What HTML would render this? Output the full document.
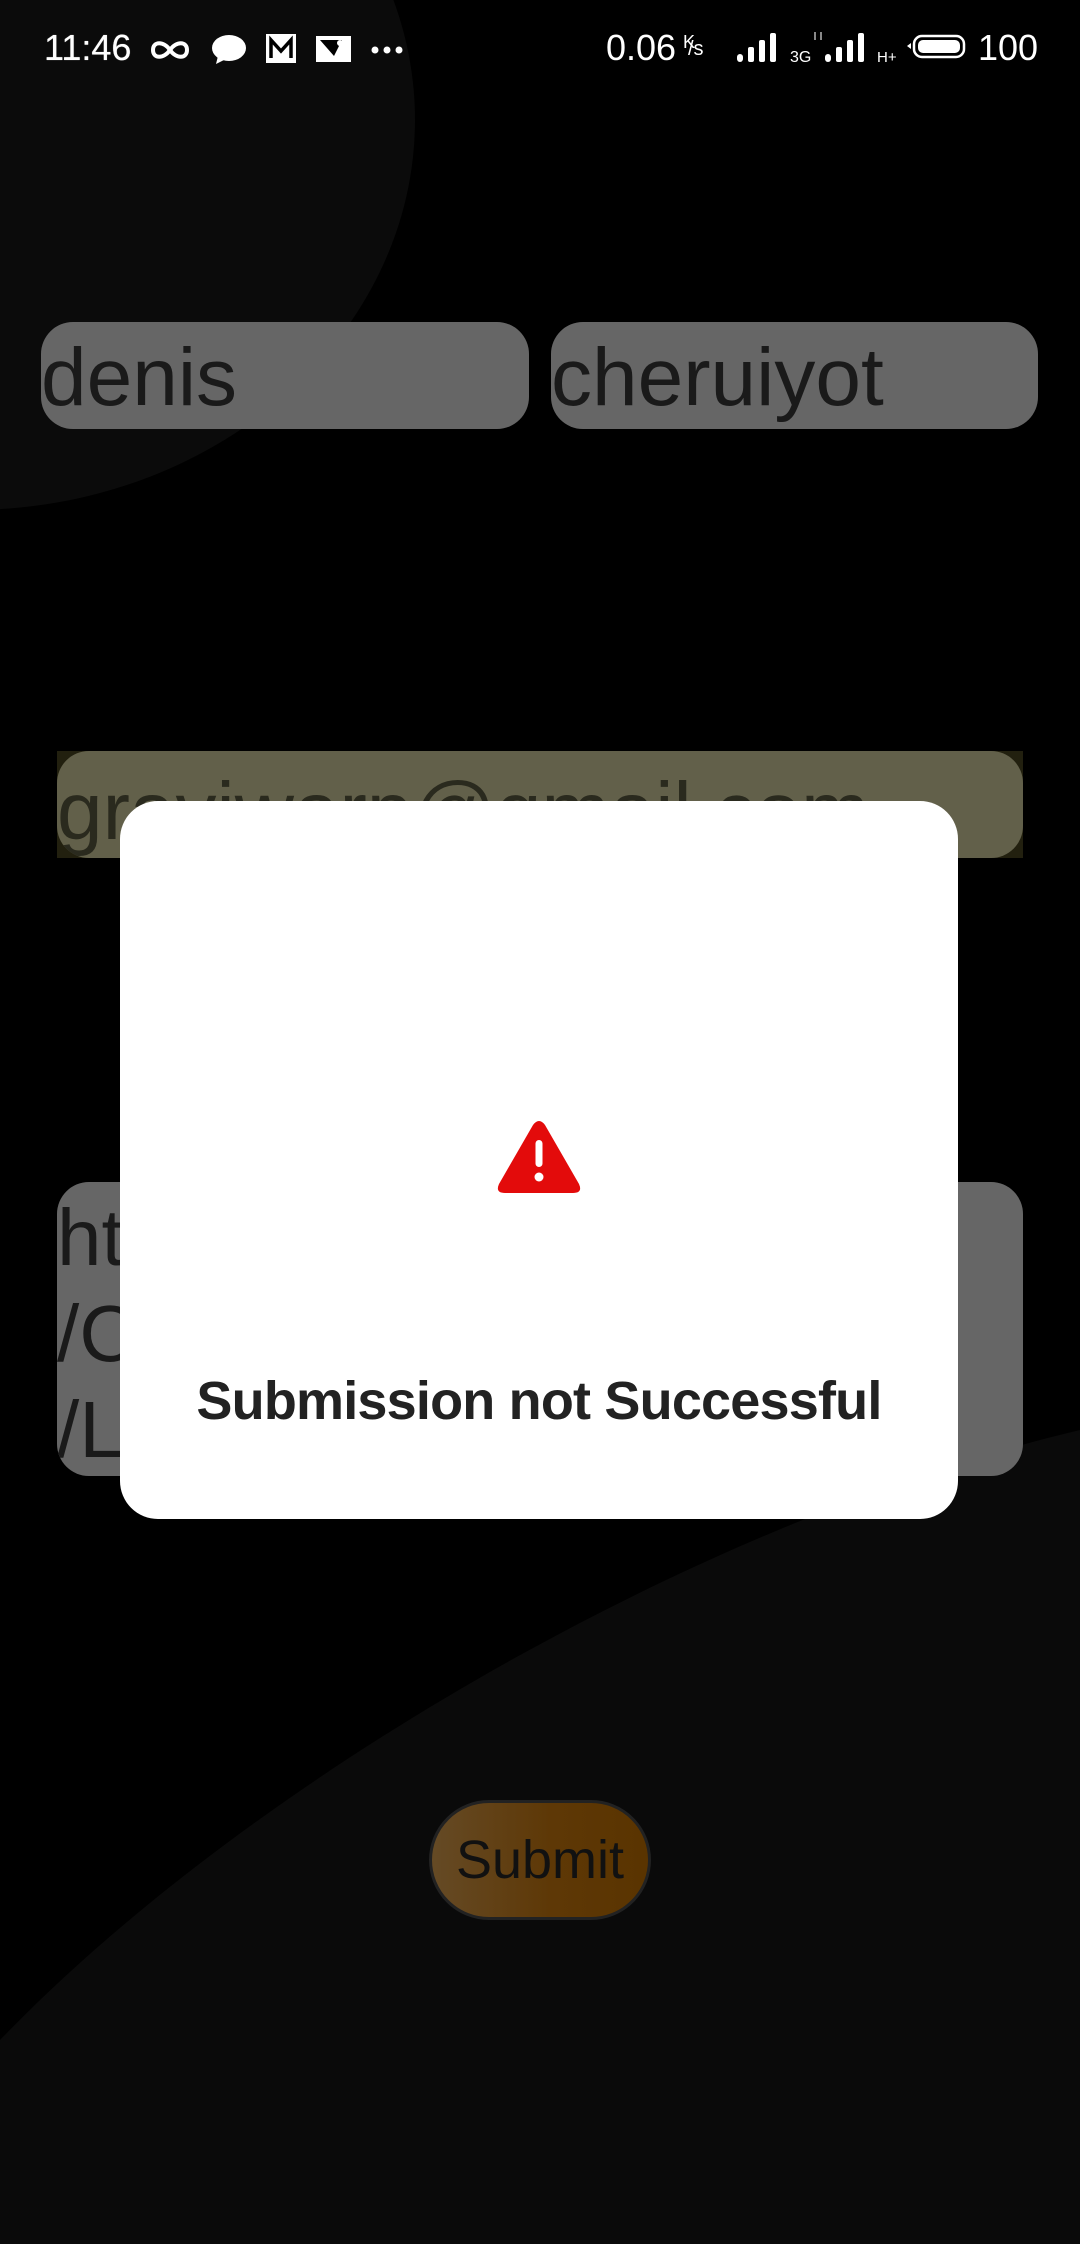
<!DOCTYPE html>
<html><head><meta charset="utf-8"><style>
*{margin:0;padding:0;box-sizing:border-box}
html,body{width:1080px;height:2244px;background:#000;overflow:hidden;font-family:"Liberation Sans",sans-serif;position:relative}
.abs{position:absolute}
.sb{color:#fff;font-size:36px;top:28px;line-height:40px}
.field{position:absolute;background:#666;border-radius:32px;color:#1a1a1a;font-size:82px;line-height:1;overflow:hidden;white-space:nowrap}
</style></head><body>
<svg class="abs" style="left:0;top:0" width="1080" height="2244">
<ellipse cx="-30" cy="120" rx="445" ry="390" fill="#0b0b0b"/>
<path d="M1080 1430 C700 1520 250 1780 0 2040 L0 2244 L1080 2244 Z" fill="#0a0a0a"/>
</svg>

<div class="abs sb" style="left:44px;text-shadow:0 0 0.6px #fff">11:46</div>
<svg class="abs" style="left:150px;top:34px" width="260" height="32">
<path d="M20 16 C14 7 3 7 3 16 C3 25 14 25 20 16 C26 7 37 7 37 16 C37 25 26 25 20 16" stroke="#fff" stroke-width="4" fill="none"/>
<ellipse cx="79" cy="14" rx="17" ry="13" fill="#fff"/><path d="M68 22 L66 30 L76 25 Z" fill="#fff"/>
<rect x="116" y="0" width="30" height="29" fill="#fff"/><path d="M121 24 V6 L131 17 L141 6 V24" stroke="#000" stroke-width="3.5" fill="none"/>
<rect x="166" y="2" width="35" height="26" fill="#fff"/><path d="M170 6 H192 L184 22 Z" fill="#000"/><circle cx="190" cy="9" r="3" fill="#fff"/>
<circle cx="225" cy="16" r="3.5" fill="#fff"/><circle cx="237" cy="16" r="3.5" fill="#fff"/><circle cx="249" cy="16" r="3.5" fill="#fff"/>
</svg>

<div class="abs sb" style="left:606px">0.06</div>
<div class="abs" style="left:683px;top:32px;color:#fff;font-size:18px">K</div>
<div class="abs" style="left:688px;top:38px;color:#fff;font-size:20px">/s</div>
<svg class="abs" style="left:735px;top:30px" width="240" height="36">
<rect x="2" y="24" width="6" height="8" rx="3" fill="#fff"/><rect x="13" y="17" width="6" height="15" rx="2" fill="#fff"/><rect x="24" y="10" width="6" height="22" rx="2" fill="#fff"/><rect x="35" y="3" width="6" height="29" rx="2" fill="#fff"/>
<text x="55" y="32" font-size="16" fill="#fff" font-family="Liberation Sans">3G</text>
<path d="M80 2 V10 M86 2 V10" stroke="#888" stroke-width="2"/>
<rect x="90" y="24" width="6" height="8" rx="3" fill="#fff"/><rect x="101" y="17" width="6" height="15" rx="2" fill="#fff"/><rect x="112" y="10" width="6" height="22" rx="2" fill="#fff"/><rect x="123" y="3" width="6" height="29" rx="2" fill="#fff"/>
<text x="142" y="32" font-size="15" fill="#fff" font-family="Liberation Sans">H+</text>
<rect x="179" y="6" width="50" height="21" rx="8" stroke="#fff" stroke-width="2.5" fill="none"/><rect x="183" y="10" width="42" height="13" rx="5" fill="#fff"/><path d="M176 13 L172 16 L176 19Z" fill="#fff"/>
</svg>
<div class="abs sb" style="left:978px">100</div>

<div class="field" style="left:41px;top:322px;width:488px;height:107px;padding-top:15px">denis</div>
<div class="field" style="left:551px;top:322px;width:487px;height:107px;padding-top:15px">cheruiyot</div>

<div class="abs" style="left:57px;top:751px;width:966px;height:107px;background:#22200f"></div>
<div class="field" style="left:57px;top:751px;width:966px;height:107px;background:#62604a;color:#2a2a1e;padding-top:20px">graviwarp@gmail.com</div>

<div class="field" style="left:57px;top:1182px;width:966px;height:294px;font-size:80px;line-height:96px;padding-top:8px;white-space:normal;word-break:break-all">https://www.google.com<br>/Chrome/sample<br>/Link</div>

<div class="abs" style="left:120px;top:801px;width:838px;height:718px;background:#fff;border-radius:38px"></div>
<svg class="abs" style="left:497px;top:1120px" width="84" height="76" viewBox="0 0 84 76">
<path d="M36 5 Q42 -3 48 5 L82 64 Q86 73 76 73 L8 73 Q-2 73 2 64 Z" fill="#e30b0b"/>
<rect x="38.5" y="20" width="7" height="27" rx="3.5" fill="#fff"/><circle cx="42" cy="57" r="4.5" fill="#fff"/>
</svg>
<div class="abs" style="left:120px;top:1370px;width:838px;text-align:center;font-size:54px;color:#222;font-weight:bold;letter-spacing:-0.8px">Submission not Successful</div>

<div class="abs" style="left:429px;top:1800px;width:222px;height:120px;border-radius:60px;border:3px solid #222;background:linear-gradient(90deg,#654a25,#5e3806 55%,#5a3400);color:#111;font-size:54px;text-align:center;line-height:114px">Submit</div>
</body></html>
